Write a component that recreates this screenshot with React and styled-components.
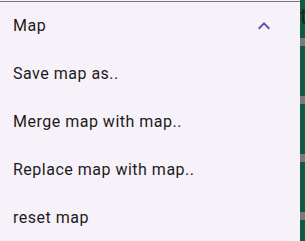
import React from "react";
import styled, { createGlobalStyle } from "styled-components";

const GlobalStyle = createGlobalStyle`
  html, body {
    margin: 0;
    padding: 0;
    background: #f7f2fa;
  }
  body {
    font-family: Roboto, "Noto Sans", sans-serif;
  }
`;

const Page = styled.div`
  display: flex;
  width: 305px;
  height: 241px;
  overflow: hidden;
`;

const Panel = styled.div`
  width: 300px;
  padding-top: 1px;
  background: #f7f2fa;
  display: flex;
  flex-direction: column;
`;

const Header = styled.div`
  height: 48px;
  border-top: 1px solid #79747e;
  display: flex;
  align-items: center;
  justify-content: space-between;
  padding: 0 24px 0 13px;
  color: #1d1b20;
  font-size: 16px;
  letter-spacing: 0.5px;
`;

const Item = styled.div`
  height: 48px;
  display: flex;
  align-items: center;
  padding-left: 13px;
  color: #1d1b20;
  font-size: 16px;
  letter-spacing: 0.5px;
`;

const Strip = styled.div`
  width: 5px;
  background: #0d5b40;
  display: flex;
  flex-direction: column;
  overflow: hidden;
`;

const StripTop = styled.div`
  height: 38px;
  flex-shrink: 0;
  font-size: 22px;
  line-height: 34px;
  color: #0a2e20;
  overflow: hidden;
`;

const Bar = styled.div`
  height: 8px;
  flex-shrink: 0;
  background: #7d787d;
  & + & {
    margin-top: 50px;
  }
`;

const ChevronUp = () => (
  <svg width="24" height="24" viewBox="0 0 24 24">
    <path d="M12 8l-6 6 1.41 1.41L12 10.83l4.59 4.58L18 14z" fill="#6750a4" />
  </svg>
);

const items = ["Save map as..", "Merge map with map..", "Replace map with map..", "reset map"];

export default function App() {
  return (
    <>
      <GlobalStyle />
      <Page>
        <Panel>
          <Header>
            <span>Map</span>
            <ChevronUp />
          </Header>
          {items.map((t) => (
            <Item key={t}>{t}</Item>
          ))}
        </Panel>
        <Strip>
          <StripTop>t</StripTop>
          <Bar />
          <Bar />
          <Bar />
          <Bar />
        </Strip>
      </Page>
    </>
  );
}
